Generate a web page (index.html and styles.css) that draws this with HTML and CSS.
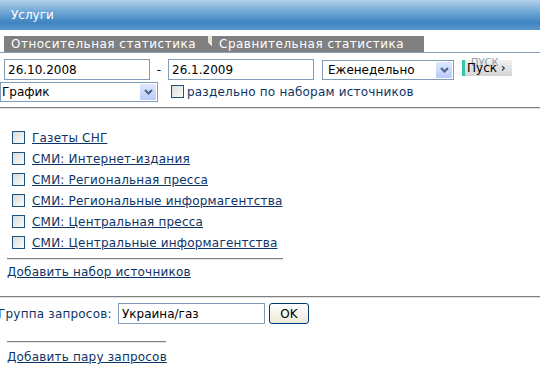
FILE: index.html
```html
<!DOCTYPE html>
<html lang="ru">
<head>
    <meta charset="UTF-8">
    <title>Услуги</title>
    <link rel="stylesheet" href="styles.css">
</head>
<body>
    <div class="header">Услуги</div>

    <div class="tabs">
        <span class="tab active">Относительная статистика</span>
        <span class="tab-notch"></span>
        <span class="tab">Сравнительная статистика</span>
    </div>

    <div class="controls">
        <div class="row">
            <input class="field date" type="text" value="26.10.2008">
            <span class="dash">-</span>
            <input class="field date" type="text" value="26.1.2009">
            <span class="select period">
                <span class="select-text">Еженедельно</span>
                <span class="arrow"><svg width="9" height="6" viewBox="0 0 9 6"><path d="M1 1 L4.5 4.5 L8 1" fill="none" stroke="#4d6185" stroke-width="2"/></svg></span>
            </span>
            <span class="go"><span class="go-bar"></span><span class="go-shadow">ПУСК</span><span class="go-text">Пуск ›</span></span>
        </div>
        <div class="row second">
            <span class="select view">
                <span class="select-text">График</span>
                <span class="arrow"><svg width="9" height="6" viewBox="0 0 9 6"><path d="M1 1 L4.5 4.5 L8 1" fill="none" stroke="#4d6185" stroke-width="2"/></svg></span>
            </span>
            <label class="check-label"><span class="box"></span>раздельно по наборам источников</label>
        </div>
    </div>

    <div class="rule"></div>

    <ul class="sources">
        <li><span class="box"></span><a href="#">Газеты СНГ</a></li>
        <li><span class="box"></span><a href="#">СМИ: Интернет-издания</a></li>
        <li><span class="box"></span><a href="#">СМИ: Региональная пресса</a></li>
        <li><span class="box"></span><a href="#">СМИ: Региональные информагентства</a></li>
        <li><span class="box"></span><a href="#">СМИ: Центральная пресса</a></li>
        <li><span class="box"></span><a href="#">СМИ: Центральные информагентства</a></li>
    </ul>
    <div class="short-rule wide"></div>
    <a class="add" href="#">Добавить набор источников</a>

    <div class="rule second-rule"></div>

    <div class="query">
        <span class="query-label">Группа запросов:</span>
        <input class="field query-input" type="text" value="Украина/газ">
        <button class="ok">OK</button>
    </div>
    <div class="short-rule narrow"></div>
    <a class="add last" href="#">Добавить пару запросов</a>
</body>
</html>
```

FILE: styles.css
```css
body {
    margin: 0;
    font-family: "DejaVu Sans", Verdana, sans-serif;
    font-size: 12px;
    color: #0e3466;
    background-color: #fff;
    overflow: hidden;
}
.header {
    height: 30px;
    line-height: 30px;
    padding-left: 11px;
    color: #fff;
    font-family: Tahoma, "DejaVu Sans", sans-serif;
    font-size: 12px;
    background: linear-gradient(#b3d1ea 0%, #76abd8 35%, #3f84c0 75%, #5a97cc 100%);
}
.tabs {
    display: flex;
    margin-top: 6px;
    padding-left: 4px;
    height: 16px;
    border-bottom: 1px solid #8d9fb5;
}
.tab {
    background-color: #808080;
    color: #fff;
    line-height: 16px;
    padding-left: 7px;
    letter-spacing: 0.5px;
    width: 197px;
}
.tab-notch {
    width: 4px;
    background: linear-gradient(225deg, #e9e6d8 50%, #808080 50%);
}
.tab + .tab-notch + .tab {
    width: 205px;
}
.controls {
    padding: 6px 0 0 0;
}
.row {
    display: flex;
    align-items: center;
    height: 21px;
}
.row.second {
    margin-top: 1px;
}
.field {
    box-sizing: border-box;
    height: 21px;
    border: 1px solid #7f9db9;
    font-family: "DejaVu Sans", Verdana, sans-serif;
    font-size: 12px;
    color: #000;
    padding: 0 3px;
    margin: 0;
    outline: none;
}
.date {
    width: 146px;
}
.row .date:first-child {
    margin-left: 4px;
}
.dash {
    color: #000;
    width: 18px;
    text-align: center;
}
.select {
    position: relative;
    box-sizing: border-box;
    display: inline-block;
    height: 20px;
    border: 1px solid #7f9db9;
    color: #000;
    line-height: 18px;
    padding-left: 5px;
}
.select.period {
    width: 132px;
    margin-left: 8px;
}
.select.view {
    width: 158px;
    padding-left: 1px;
}
.arrow {
    position: absolute;
    right: 1px;
    top: 1px;
    width: 16px;
    height: 16px;
    background: linear-gradient(#dfe8fd, #b8cbf8);
    border-radius: 1px;
    display: flex;
    align-items: center;
    justify-content: center;
}
.go {
    position: relative;
    margin-left: 8px;
    width: 50px;
    height: 16px;
    margin-top: -3px;
    background: linear-gradient(#f0f0f0, #d4d4d4);
    font-family: "DejaVu Sans", sans-serif;
}
.go-bar {
    position: absolute;
    left: 0;
    top: 0;
    width: 3px;
    height: 16px;
    background-color: #33c6a0;
}
.go-shadow {
    position: absolute;
    left: 9px;
    top: -3px;
    font-size: 10px;
    color: #8fa0b0;
}
.go-text {
    position: absolute;
    left: 5px;
    top: 1px;
    color: #000;
    font-size: 12px;
    line-height: 14px;
}
.check-label {
    display: flex;
    align-items: center;
    margin-left: 13px;
    color: #0e3466;
    letter-spacing: 0.2px;
}
.box {
    box-sizing: border-box;
    display: inline-block;
    width: 13px;
    height: 13px;
    border: 1px solid #1c5180;
    background: linear-gradient(135deg, #dcdcd6, #fbfbfa);
    margin-right: 3px;
}
.rule {
    margin-top: 5px;
    height: 1px;
    background-color: #808080;
    border-bottom: 1px solid #e0e0e0;
}
.sources {
    list-style: none;
    margin: 18px 0 0 0;
    padding: 0 0 0 12px;
}
.sources li {
    display: flex;
    align-items: center;
    height: 21px;
}
.sources .box {
    margin-right: 7px;
}
a {
    color: #0e3466;
    text-decoration: underline;
    letter-spacing: 0.2px;
}
.short-rule {
    height: 1px;
    background-color: #808080;
    border-bottom: 1px solid #e6e6e6;
    margin-left: 7px;
}
.short-rule.wide {
    width: 276px;
    margin-top: 5px;
}
.short-rule.narrow {
    width: 159px;
    margin-top: 17px;
}
.add {
    display: block;
    margin: 5px 0 0 7px;
    width: max-content;
}
.add.last {
    margin-top: 7px;
}
.second-rule {
    margin-top: 17px;
}
.query {
    display: flex;
    align-items: center;
    margin-top: 5px;
    margin-left: -2px;
}
.query-label {
    width: 120px;
    letter-spacing: 0.2px;
}
.query-input {
    width: 147px;
}
.ok {
    margin-left: 4px;
    width: 40px;
    height: 21px;
    box-sizing: border-box;
    border: 1px solid #003c74;
    border-radius: 3px;
    background: linear-gradient(#fefefe, #ece9d8);
    font-family: "DejaVu Sans", sans-serif;
    font-size: 12px;
    color: #000;
    padding: 0;
}
```
